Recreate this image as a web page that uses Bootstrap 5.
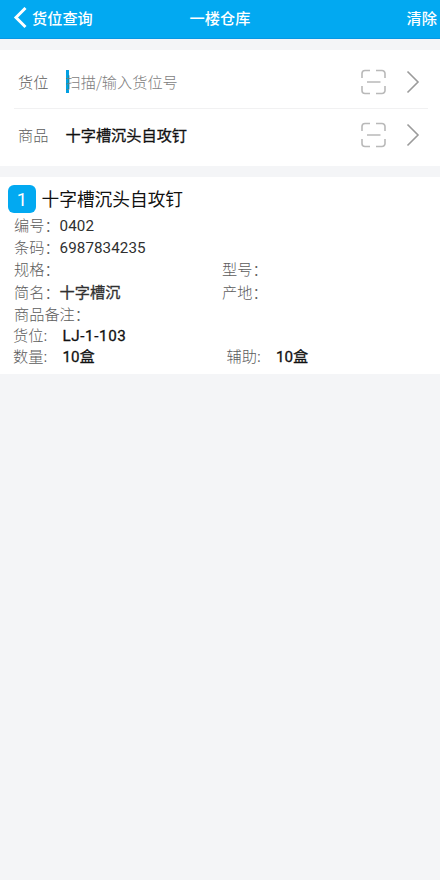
<!DOCTYPE html>
<html lang="zh-CN">
<head>
<meta charset="utf-8">
<meta name="viewport" content="width=device-width, initial-scale=1">
<title>货位查询</title>
<link href="https://cdn.jsdelivr.net/npm/bootstrap@5.3.0/dist/css/bootstrap.min.css" rel="stylesheet">
<style>
body{background:#f4f5f7;font-family:"Noto Sans CJK SC",sans-serif;font-size:15.2px;line-height:22px;color:#111;white-space:nowrap}
.topbar{height:39px;background:#02a9f1;border-bottom:1px solid #0797e4;color:#fff;font-weight:500;padding:0 3px 2px 13px}
.topbar>*{flex:1 1 0}
.topbar .place{margin-left:-5px;margin-right:5px}
.search{margin-top:11px;height:116px;padding:5px 12px 0 14px}
.field{height:53px;padding-left:4px}
.field+.field{border-top:1px solid #f1f1f2}
.field span:not(.caret){padding-bottom:2px}
.lbl{color:#5c5c5c;font-weight:300}
.field .lbl{width:47.500px}
.caret{width:3px;height:23px;background:#02a0e3;margin-right:-3px}
.hint{color:#7d7d7d;font-weight:300}
.med{font-weight:400;-webkit-text-stroke:.3px currentColor}
.scan{margin-right:20px}
.goods{margin-top:11px;height:197px;padding:6px 0 0 14px}
.goods-title{height:30px;margin-left:-6px;font-size:17.7px;gap:5.500px}
.num{width:28px;height:28px;border-radius:6px;background:#02a9f1;color:#fff;font:18.500px/28px Roboto,sans-serif;margin-top:2px;padding-top:2px}
.line{height:22.2px}
.line-sm{height:21px;margin-left:-1px}
.goods .line-sm:nth-last-child(2){margin-top:-1px}
.half{width:208px}
.half-sm{width:213.5px}
.dark-text{color:#303030}
.tight{width:49.500px}
.digits{font-family:Roboto,"Noto Sans CJK SC",sans-serif}
.digits:not(.med){letter-spacing:.07px}
.code{letter-spacing:.6px}
.title-row{padding-bottom:3px}
</style>
<script src="https://cdn.jsdelivr.net/npm/bootstrap@5.3.0/dist/js/bootstrap.bundle.min.js"></script>
</head>
<body>
<header class="topbar d-flex align-items-center">
  <div class="d-flex align-items-center">
    <svg width="15" height="22" viewBox="0 0 15 22" fill="none" stroke="#fff" stroke-width="3"><path d="M12.500 1 3 10.500l9.500 9.500"/></svg>
    <span class="ms-1 title-row">货位查询</span>
  </div>
  <div class="place title-row text-center">一楼仓库</div>
  <div class="title-row text-end">清除</div>
</header>

<section class="search bg-white">
  <div class="field d-flex align-items-center">
    <span class="lbl">货位</span><span class="caret"></span><span class="hint">扫描/输入货位号</span>
    <svg class="scan ms-auto" width="26" height="26" viewBox="0 0 26 26" fill="none" stroke="#b9b9b9" stroke-width="1.6"><path d="M2 9V4.500a3 3 0 0 1 3-3H10M16 1.500h6a3 3 0 0 1 3 3V9M25 17v4.500a3 3 0 0 1-3 3H16M10 24.500H5a3 3 0 0 1-3-3V17M7 13h13.500"/></svg>
    <svg class="me-2" width="14" height="24" viewBox="0 0 14 24" fill="none" stroke="#9b9b9b" stroke-width="1.6"><path d="m1.500 1.500 10.500 10.500L1.500 22.500"/></svg>
  </div>
  <div class="field d-flex align-items-center">
    <span class="lbl">商品</span><span class="med">十字槽沉头自攻钉</span>
    <svg class="scan ms-auto" width="26" height="26" viewBox="0 0 26 26" fill="none" stroke="#b9b9b9" stroke-width="1.6"><path d="M2 9V4.500a3 3 0 0 1 3-3H10M16 1.500h6a3 3 0 0 1 3 3V9M25 17v4.500a3 3 0 0 1-3 3H16M10 24.500H5a3 3 0 0 1-3-3V17M7 13h13.500"/></svg>
    <svg class="me-2" width="14" height="24" viewBox="0 0 14 24" fill="none" stroke="#9b9b9b" stroke-width="1.6"><path d="m1.500 1.500 10.500 10.500L1.500 22.500"/></svg>
  </div>
</section>

<main class="goods bg-white">
  <div class="goods-title d-flex align-items-center"><span class="num d-flex align-items-center justify-content-center">1</span><span>十字槽沉头自攻钉</span></div>
  <div class="line d-flex align-items-baseline"><span class="lbl">编号：</span><span class="dark-text digits">0402</span></div>
  <div class="line d-flex align-items-baseline"><span class="lbl">条码：</span><span class="dark-text digits">6987834235</span></div>
  <div class="line d-flex align-items-baseline"><span class="lbl half">规格：</span><span class="lbl">型号：</span></div>
  <div class="line d-flex align-items-baseline"><span class="half d-flex"><span class="lbl">简名：</span><span class="dark-text med">十字槽沉</span></span><span class="lbl">产地：</span></div>
  <div class="line d-flex align-items-baseline"><span class="lbl">商品备注：</span></div>
  <div class="line-sm d-flex align-items-baseline"><span class="lbl tight">货位:</span><span class="med digits code">LJ-1-103</span></div>
  <div class="line-sm d-flex align-items-baseline"><span class="half-sm d-flex align-items-baseline"><span class="lbl tight">数量:</span><span class="med digits">10盒</span></span><span class="lbl tight">辅助:</span><span class="med digits">10盒</span></div>
</main>
</body>
</html>
